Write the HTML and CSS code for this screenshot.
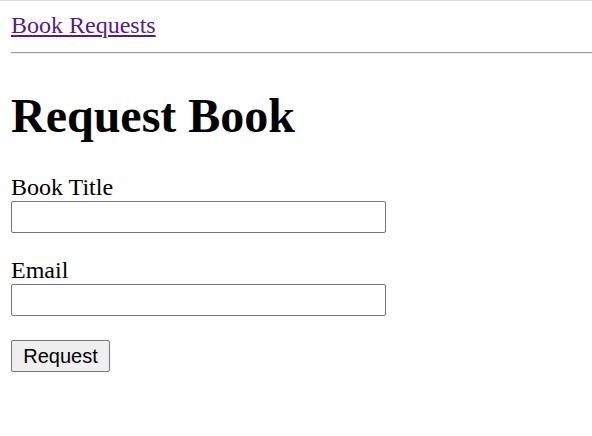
FILE: index.html
```html
<!DOCTYPE html>
<html>
<head>
<meta charset="utf-8">
<link rel="stylesheet" href="styles.css">
</head>
<body>
<div class="topline"></div>
<div class="page">
  <nav class="nav"><a href="#" class="nav-link">Book Requests</a></nav>
  <hr class="rule">
  <h1 class="title">Request Book</h1>
  <form class="form">
    <div class="field">
      <label class="label" for="t">Book Title</label>
      <input class="input" id="t" type="text">
    </div>
    <div class="field">
      <label class="label" for="e">Email</label>
      <input class="input" id="e" type="email">
    </div>
    <button class="btn" type="button">Request</button>
  </form>
</div>
</body>
</html>
```
FILE: styles.css
```css
html, body {
  margin: 0;
  padding: 0;
  background: #fff;
}
body {
  font-family: "Liberation Serif", "Times New Roman", serif;
  font-size: 24px;
  color: #000;
  overflow: hidden;
}
.topline {
  height: 1px;
  background: #dadce0;
}
.page {
  padding: 11px 0 0 11px;
}
.nav {
  line-height: 27px;
  height: 27px;
}
.nav-link {
  color: #551a8b;
  text-decoration: underline;
}
.rule {
  margin: 13px 0 0 0;
  border: 0;
  border-top: 1px solid #9a9a9a;
  border-bottom: 1px solid #eeeeee;
  height: 0;
}
.title {
  font-size: 48px;
  font-weight: bold;
  line-height: 55px;
  margin: 34px 0 0 0;
}
.form {
  margin-top: 31px;
  display: flex;
  flex-direction: column;
  align-items: flex-start;
}
.field {
  display: flex;
  flex-direction: column;
  align-items: flex-start;
  margin-bottom: 24px;
}
.label {
  line-height: 27px;
  height: 27px;
}
.input {
  box-sizing: border-box;
  width: 375px;
  height: 32px;
  margin: 0;
  border: 1px solid #767676;
  border-radius: 2px;
  background: #fff;
  font-size: 18px;
}
.btn {
  box-sizing: border-box;
  height: 32px;
  width: 99px;
  padding: 0;
  margin: 0;
  font-family: "Liberation Sans", Arial, sans-serif;
  font-size: 20px;
  color: #000;
  background: #efefef;
  border: 1px solid #767676;
  border-radius: 2px;
}
```
